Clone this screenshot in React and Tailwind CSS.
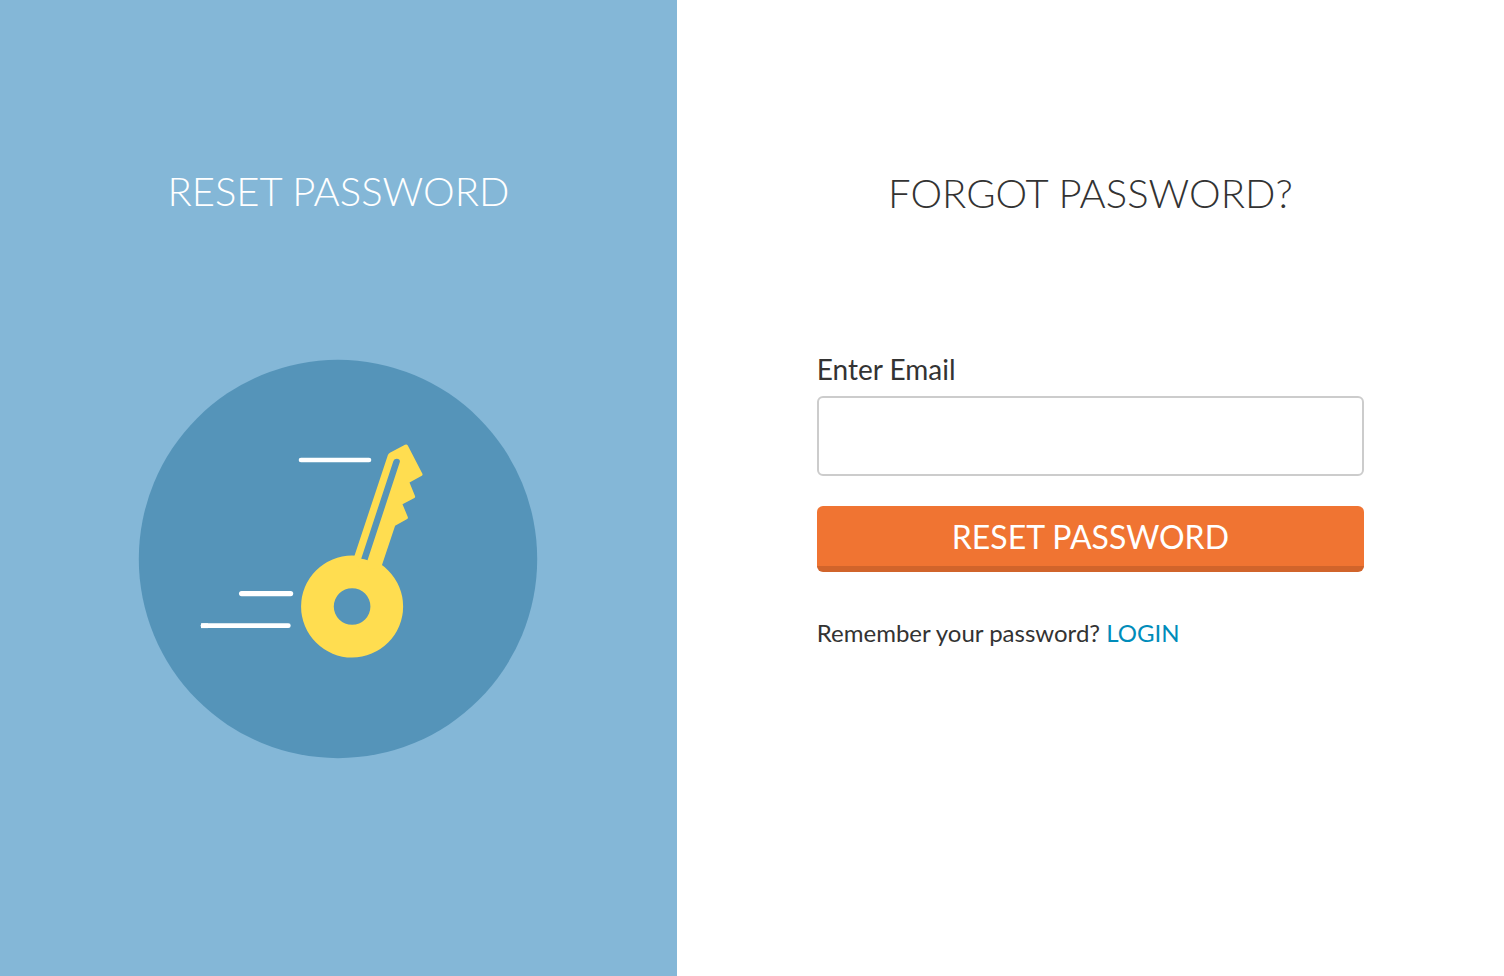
function KeyBadge() {
  return (
    <svg className="h-100 w-100" viewBox="0 0 400 400" aria-hidden="true">
      <circle cx="200" cy="200" r="199.200" fill="#5594b9" />
      <g stroke="#fff" strokeLinecap="round">
        <path strokeWidth="4.600" d="M163 101H231" />
        <path strokeWidth="5.200" d="M103.600 234.600H152.600" />
        <path strokeWidth="4.800" d="M65 266.700H150.300" />
        <path strokeWidth="4.800" strokeLinecap="butt" d="M63 266.700H70" />
      </g>
      <g transform="translate(0.5 0.5)">
        <g fill="#ffdd50">
          <path
            fillRule="evenodd"
            d="M213.600 196A51 51 0 1 0 213.600 298A51 51 0 1 0 213.600 196ZM213.600 228.700A18.300 18.300 0 1 1 213.600 265.300A18.300 18.300 0 1 1 213.600 228.700Z"
          />
          <path d="M215.400 198L249.400 95.500Q250 93.900 251.400 93.200L266.500 85.200Q268.300 84.300 269.300 86L283.900 114.300Q284.400 115.500 283.300 116.200L271 123L276.500 136.600Q276.900 137.800 275.900 138.400L264 144.700L269.300 157.500Q269.700 158.700 268.700 159.400L256.600 166.300L243 207L222 212Z" />
        </g>
        <path fill="#5594b9" d="M222.700 199.200L254.900 101.600Q255.700 99.200 258.300 99.200Q261.900 99.500 261.300 102.500L229 200.800Q226 199.600 222.700 199.200Z" />
      </g>
    </svg>
  );
}

export default function App() {
  return (
    <div className="flex min-h-screen bg-white font-['Lato',sans-serif] text-[#333333]">
      <aside className="flex w-[45%] flex-col items-center bg-[#84b7d7] pt-[166px]">
        <h2 className="mb-[143px] text-[40px] leading-[50px] font-light text-white">RESET PASSWORD</h2>
        <KeyBadge />
      </aside>
      <main className="flex flex-1 flex-col px-[140px] pt-[168px]">
        <h1 className="mb-[134px] text-center text-[40px] leading-[50px] font-light">FORGOT PASSWORD?</h1>
        <form className="flex flex-col">
          <label htmlFor="email" className="mb-[10px] text-[28px] leading-[34px]">Enter Email</label>
          <input id="email" type="email" className="mb-[30px] h-20 w-full rounded-md border-2 border-[#cccccc] bg-white px-4 text-[28px]" />
          <button type="button" className="h-[66px] w-full rounded-md border-b-[6px] border-[#d1642b] bg-[#f07432] pt-[2px] text-[32px] text-white">RESET PASSWORD</button>
        </form>
        <p className="mt-[46px] text-2xl leading-[30px]">
          Remember your password? <a href="#login" className="text-[#008cba]">LOGIN</a>
        </p>
      </main>
    </div>
  );
}
